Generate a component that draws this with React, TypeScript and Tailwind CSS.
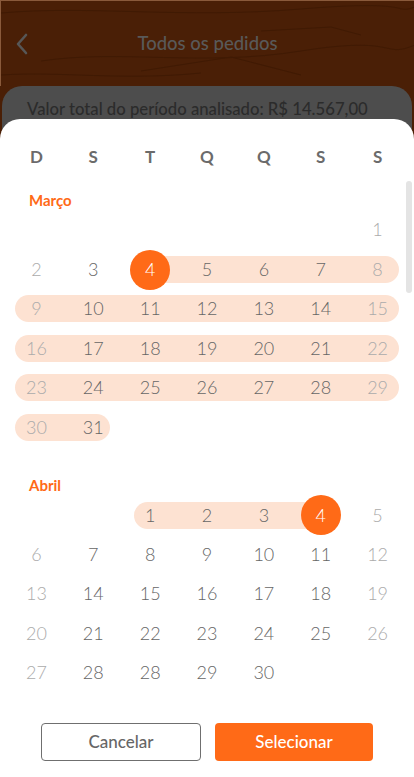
import React from "react";

type Pill = { start: number; end: number; className: string };
type Week = { days: (number | null)[]; selected?: number; pill?: Pill };

const weekDays = ["D", "S", "T", "Q", "Q", "S", "S"];

const months: { name: string; weeks: Week[] }[] = [
  {
    name: "Março",
    weeks: [
      { days: [null, null, null, null, null, null, 1] },
      {
        days: [2, 3, 4, 5, 6, 7, 8],
        selected: 2,
        pill: { start: 3, end: 7, className: "ml-[28px] mr-[7px]" },
      },
      {
        days: [9, 10, 11, 12, 13, 14, 15],
        pill: { start: 1, end: 7, className: "mx-[7px]" },
      },
      {
        days: [16, 17, 18, 19, 20, 21, 22],
        pill: { start: 1, end: 7, className: "mx-[7px]" },
      },
      {
        days: [23, 24, 25, 26, 27, 28, 29],
        pill: { start: 1, end: 7, className: "mx-[7px]" },
      },
      {
        days: [30, 31, null, null, null, null, null],
        pill: { start: 1, end: 2, className: "ml-[7px] mr-[12px]" },
      },
    ],
  },
  {
    name: "Abril",
    weeks: [
      {
        days: [null, null, 1, 2, 3, 4, 5],
        selected: 5,
        pill: { start: 3, end: 6, className: "ml-[12px] mr-[28px]" },
      },
      { days: [6, 7, 8, 9, 10, 11, 12] },
      { days: [13, 14, 15, 16, 17, 18, 19] },
      { days: [20, 21, 22, 23, 24, 25, 26] },
      { days: [27, 28, 28, 29, 30, null, null] },
    ],
  },
];

function WeekRow({ week }: { week: Week }) {
  return (
    <div className="grid h-[39.5px] grid-cols-7 items-center px-[8px]">
      {week.pill ? (
        <div
          className={`h-[27px] rounded-full bg-[#fde2d2] ${week.pill.className}`}
          style={{
            gridRow: 1,
            gridColumn: `${week.pill.start} / ${week.pill.end + 1}`,
          }}
        />
      ) : null}
      {week.days.map((n, i) => {
        const weekend = i === 0 || i === 6;
        const selected = week.selected === i;
        return (
          <div
            key={i}
            className="relative flex items-center justify-center"
            style={{ gridRow: 1, gridColumn: i + 1 }}
          >
            {n === null ? null : selected ? (
              <span className="flex h-10 w-10 items-center justify-center rounded-full bg-[#ff6a17] text-[18px] font-light text-white">
                {n}
              </span>
            ) : (
              <span
                className={`text-[18px] font-light ${
                  weekend ? "text-[#ababab]" : "text-[#666666]"
                }`}
              >
                {n}
              </span>
            )}
          </div>
        );
      })}
    </div>
  );
}

export default function App() {
  return (
    <div
      className="relative h-[777px] w-[414px] overflow-hidden bg-[#4a1f06]"
      style={{ fontFamily: "Lato, 'Open Sans', sans-serif" }}
    >
      {/* page under the sheet, dimmed */}
      <div className="relative flex h-[86px] items-center border-l border-t border-[#8a5a3b] px-[14px]">
        {/* wood grain */}
        <svg
          className="absolute inset-0"
          width="414"
          height="86"
          viewBox="0 0 414 86"
          fill="none"
        >
          <g stroke="#3c1803" strokeWidth="1" opacity="0.7">
            <path d="M0 12 C90 4 180 18 300 8 S390 14 414 6" />
            <path d="M40 60 C120 48 200 66 300 50 S380 58 414 44" />
            <path d="M140 70 L230 56 L300 74" />
            <path d="M0 74 C60 70 120 80 200 72" />
            <path d="M260 30 L330 26 L360 34" />
          </g>
        </svg>
        <svg className="relative" width="14" height="22" viewBox="0 0 14 22" fill="none">
          <path
            d="M11 2 L3 11 L11 20"
            stroke="#575757"
            strokeWidth="2.6"
            strokeLinecap="round"
            strokeLinejoin="round"
          />
        </svg>
        <h1 className="relative flex-1 pr-[14px] text-center text-[18.5px] font-medium text-[#595959]">
          Todos os pedidos
        </h1>
      </div>
      <div className="mx-[2px] h-full rounded-t-[20px] bg-[#4d4d4d] px-[25px] pt-[11px]">
        <p className="text-[16.7px] font-medium text-[#2b2b2b]">
          Valor total do período analisado: R$ 14.567,00
        </p>
      </div>

      {/* bottom sheet */}
      <div className="absolute inset-x-0 bottom-0 top-[119px] flex flex-col rounded-t-[20px] bg-white">
        <div className="mt-[18px] grid h-10 grid-cols-7 items-center px-[8px]">
          {weekDays.map((d, i) => (
            <span
              key={i}
              className="text-center text-[17px] font-bold text-[#6b6b6b]"
            >
              {d}
            </span>
          ))}
        </div>

        <div className="relative flex-1 overflow-hidden pt-[13px]">
          {months.map((m, mi) => (
            <div key={m.name} className={mi > 0 ? "mt-[28px]" : ""}>
              <div className="flex h-5 items-center px-[29px] text-[15px] font-bold text-[#ff6a17]">
                {m.name}
              </div>
              {m.weeks.map((w, wi) => (
                <WeekRow key={wi} week={w} />
              ))}
            </div>
          ))}
          <div className="absolute right-[2px] top-[4px] h-[112px] w-[6px] rounded-full bg-[#e4e4e4]" />
        </div>

        <div className="flex gap-[14px] px-[41px] pb-[16px] pt-[18px]">
          <button className="h-[38px] flex-1 rounded-[4px] border border-[#6f6f6f] text-[17px] font-medium text-[#666666]">
            Cancelar
          </button>
          <button className="h-[38px] flex-1 rounded-[4px] bg-[#ff6a17] text-[17px] font-medium text-white">
            Selecionar
          </button>
        </div>
      </div>
    </div>
  );
}
